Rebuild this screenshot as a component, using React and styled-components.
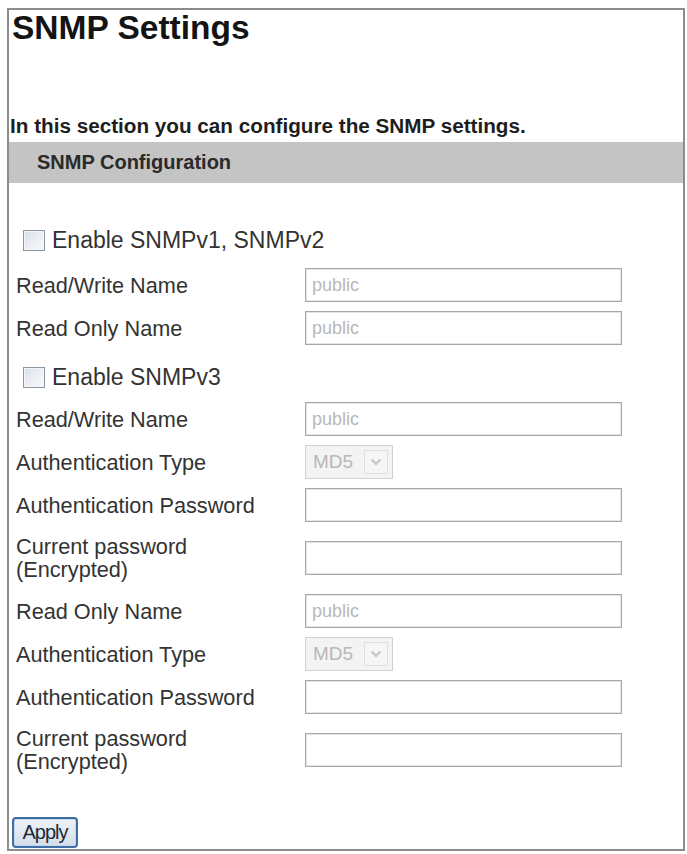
import styled, { createGlobalStyle } from "styled-components";

const GlobalStyle = createGlobalStyle`
  html, body {
    margin: 0;
    padding: 0;
    background: #ffffff;
  }
  body {
    font-family: "Liberation Sans", Arial, sans-serif;
    color: #333333;
  }
`;

const Page = styled.div`
  padding: 8px 0 0 7px;
`;

const Panel = styled.div`
  width: 674px;
  height: 839px;
  border: 2px solid #8c8c8c;
  display: flex;
  flex-direction: column;
`;

const Title = styled.h1`
  margin: 1px 0 0 3px;
  font-size: 33.5px;
  line-height: 33px;
  font-weight: bold;
  color: #141414;
`;

const Intro = styled.p`
  margin: 70px 0 0 1px;
  font-size: 20.7px;
  line-height: 24px;
  font-weight: bold;
  color: #1e1e1e;
`;

const SectionBar = styled.div`
  margin-top: 4px;
  height: 41px;
  background: #c4c4c4;
  display: flex;
  align-items: center;
  padding-left: 28px;
  font-size: 20px;
  font-weight: bold;
  color: #2a2a2a;
`;

const Form = styled.div`
  margin-top: 38px;
  padding-left: 7px;
  display: flex;
  flex-direction: column;
  gap: 9px;
`;

const CheckRow = styled.label`
  height: 38px;
  display: flex;
  align-items: center;
  padding-left: 7px;
  gap: 7px;
  font-size: 23px;
  color: #333;
  padding-top: ${(p) => (p.$shift ? "4px" : "0")};
  margin-bottom: ${(p) => (p.$shift ? "-3px" : "0")};
`;

const CheckBox = styled.input`
  appearance: none;
  margin: 0;
  width: 22px;
  height: 21px;
  border: 1.5px solid #8a96a3;
  background: linear-gradient(135deg, #d9dfe6 0%, #eef1f4 60%, #f7f8fa 100%);
  box-shadow: inset 0 0 0 1px #f4f6f8;
`;

const Row = styled.div`
  display: grid;
  grid-template-columns: 289px 317px;
  align-items: center;
  min-height: 34px;
`;

const Label = styled.div`
  font-size: 21.7px;
  line-height: 23px;
  color: #333;
  padding: ${(p) => (p.$tall ? "4px 0" : "0")};
`;

const TextBox = styled.input`
  box-sizing: border-box;
  width: 317px;
  height: 34px;
  margin: 0;
  border: 1px solid #a4a9ae;
  box-shadow: inset 0 0 0 1px #e2e5e8;
  background: #ffffff;
  padding: 0 6px;
  font-family: "Liberation Sans", Arial, sans-serif;
  font-size: 18px;
  color: #b4b4b4;
  &::placeholder {
    color: #b8b8b8;
  }
  &:disabled {
    background: #ffffff;
  }
`;

const Select = styled.div`
  box-sizing: border-box;
  width: 88px;
  height: 34px;
  border: 1px solid #cfd1d3;
  background: #f3f3f3;
  display: flex;
  align-items: center;
  justify-content: space-between;
  padding: 0 4px 0 7px;
  font-size: 19px;
  color: #b8b8b8;
`;

const Arrow = styled.span`
  box-sizing: border-box;
  width: 24px;
  height: 24px;
  border: 1px solid #dedede;
  background: #f6f6f6;
  display: flex;
  align-items: center;
  justify-content: center;
`;

const ApplyButton = styled.button`
  margin: 40px 0 0 3px;
  width: 66px;
  height: 31px;
  border: 2px solid #3d6fa6;
  border-radius: 4px;
  background: linear-gradient(#eef3f8, #d2deea);
  box-shadow: inset 0 0 0 1px #c7d8ea;
  font-family: "Liberation Sans", Arial, sans-serif;
  font-size: 20px;
  letter-spacing: -1px;
  color: #1e2a36;
  padding: 0;
  align-self: flex-start;
`;

const MD5Select = () => (
  <Select>
    MD5
    <Arrow>
      <svg width="12" height="8" viewBox="0 0 12 8">
        <path d="M1.5 1.5 L6 6 L10.5 1.5" fill="none" stroke="#c4c4c4" strokeWidth="2" />
      </svg>
    </Arrow>
  </Select>
);

const Field = ({ label, tall, children }) => (
  <Row>
    <Label $tall={tall}>{label}</Label>
    {children}
  </Row>
);

const EncryptedLabel = (
  <>
    Current password
    <br />
    (Encrypted)
  </>
);

const App = () => {
  return (
    <>
      <GlobalStyle />
      <Page>
        <Panel>
          <Title>SNMP Settings</Title>
          <Intro>In this section you can configure the SNMP settings.</Intro>
          <SectionBar>SNMP Configuration</SectionBar>
          <Form>
            <CheckRow>
              <CheckBox type="checkbox" />
              Enable SNMPv1, SNMPv2
            </CheckRow>
            <Field label="Read/Write Name">
              <TextBox disabled placeholder="public" />
            </Field>
            <Field label="Read Only Name">
              <TextBox disabled placeholder="public" />
            </Field>
            <CheckRow $shift>
              <CheckBox type="checkbox" />
              Enable SNMPv3
            </CheckRow>
            <Field label="Read/Write Name">
              <TextBox disabled placeholder="public" />
            </Field>
            <Field label="Authentication Type">
              <MD5Select />
            </Field>
            <Field label="Authentication Password">
              <TextBox type="password" />
            </Field>
            <Field tall label={EncryptedLabel}>
              <TextBox />
            </Field>
            <Field label="Read Only Name">
              <TextBox disabled placeholder="public" />
            </Field>
            <Field label="Authentication Type">
              <MD5Select />
            </Field>
            <Field label="Authentication Password">
              <TextBox type="password" />
            </Field>
            <Field tall label={EncryptedLabel}>
              <TextBox />
            </Field>
          </Form>
          <ApplyButton>Apply</ApplyButton>
        </Panel>
      </Page>
    </>
  );
};

export default App;
